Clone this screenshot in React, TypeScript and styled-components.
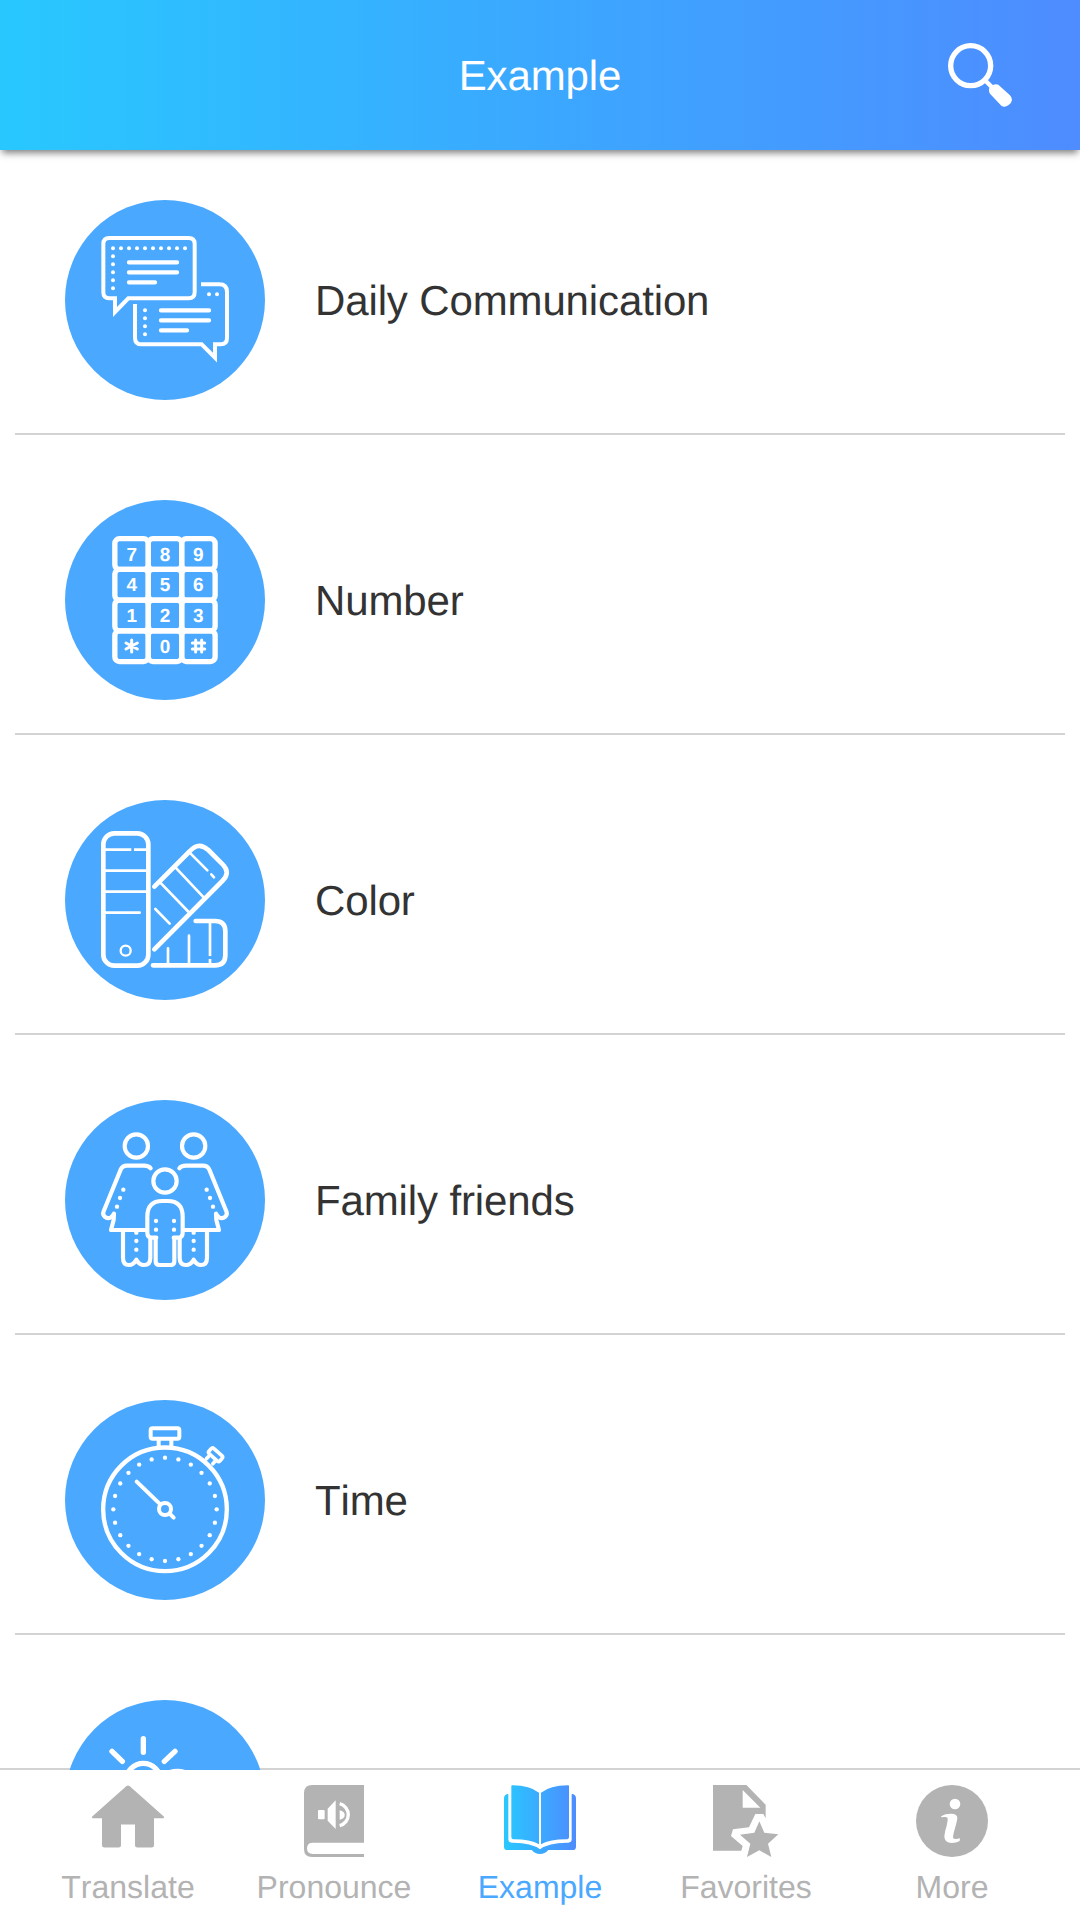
import React from "react";
import styled, { createGlobalStyle, css } from "styled-components";

const GlobalStyle = createGlobalStyle`
  html, body { margin: 0; padding: 0; background: #fff; }
  * { box-sizing: border-box; }
`;

const Screen = styled.div`
  width: 1080px;
  height: 1920px;
  display: flex;
  flex-direction: column;
  overflow: hidden;
  background: #fff;
  font-family: "Liberation Sans", Arial, sans-serif;
  font-kerning: none;
  text-rendering: geometricPrecision;
`;

const Header = styled.header`
  flex: none;
  z-index: 1;
  height: 150px;
  display: grid;
  grid-template-columns: 1fr auto 1fr;
  align-items: center;
  padding: 0 68px;
  background: linear-gradient(90deg, #28c8ff 0%, #3ba8ff 50%, #4e8cff 100%);
  box-shadow: 0 5px 7px -2px rgba(0, 0, 0, 0.5);
`;

const Title = styled.h1`
  grid-column: 2;
  margin: 0;
  padding-top: 2px;
  font-size: 42px;
  font-weight: 400;
  letter-spacing: -0.1px;
  color: #fff;
`;

const SearchButton = styled.button`
  justify-self: end;
  width: 64px;
  height: 64px;
  padding: 0;
  border: 0;
  background: none;
  color: #fff;
  svg { display: block; }
`;

const List = styled.ul`
  flex: 1;
  min-height: 0;
  margin: 0;
  padding: 0 15px;
  list-style: none;
  overflow: hidden;
  box-shadow: inset 0 -2px 0 #d3d3d3;
`;

const Row = styled.li<{ $first?: boolean }>`
  display: flex;
  align-items: flex-start;
  gap: 50px;
  height: ${(p) => (p.$first ? 285 : 300)}px;
  padding: ${(p) => (p.$first ? 50 : 65)}px 50px 0;
  border-bottom: 2px solid #d3d3d3;
`;

const Badge = styled.svg`
  flex: none;
  width: 200px;
  height: 200px;
  color: #fff;
`;

const Label = styled.span`
  line-height: 202px;
  font-size: 42px;
  letter-spacing: -0.13px;
  color: #333;
`;

const TabBar = styled.nav`
  flex: none;
  height: 150px;
  display: grid;
  grid-template-columns: repeat(5, 206px);
  justify-content: center;
  background: #fff;
`;

const Tab = styled.div<{ $active?: boolean }>`
  display: flex;
  flex-direction: column;
  align-items: center;
  gap: 12px;
  padding-top: 15px;
  font-size: 32px;
  color: #b3b3b3;
  ${(p) => p.$active && css`color: #4ba8ff;`}
`;

const TabIcon = styled.svg`
  width: 72px;
  height: 72px;
`;

type Point = [number, number];

const Dots = ({ points, r = 6 }: { points: Point[]; r?: number }) => (
  <g fill="currentColor" stroke="none">
    {points.map(([x, y]) => (
      <circle key={`${x}-${y}`} cx={x} cy={y} r={r} />
    ))}
  </g>
);

const range = (n: number) => Array.from({ length: n }, (_, i) => i);

const ChatArt = () => (
  <>
    <g strokeWidth="12">
      <path d="M163 144H401Q419 144 419 162V307Q419 325 401 325H220L180 366V325H163Q145 325 145 307V162Q145 144 163 144Z" strokeLinejoin="miter" />
      <path d="M438 283H493Q516 283 516 306V444Q516 463 497 463H480V503L440 463H260Q240 463 240 443V342" strokeLinecap="butt" strokeLinejoin="miter" />
    </g>
    <path strokeWidth="13" d="M222 217H366M222 247H366M222 277H300M318 361H462M318 391H462M318 421H396" />
    <Dots points={range(10).map((i): Point => [174 + i * 24, 175])} />
    <Dots points={range(5).map((i): Point => [174, 199 + i * 24])} />
    <Dots points={[[462, 313], [486, 313], [270, 361], [270, 385], [270, 409], [270, 433]]} />
  </>
);

const KEYS = [["7", "8", "9"], ["4", "5", "6"], ["1", "2", "3"], ["", "0", ""]];

const KeypadArt = () => (
  <>
    {KEYS.map((row, r) =>
      row.map((k, c) => (
        <g key={`${r}${c}`}>
          <rect x={179.5 + c * 100.3} y={146 + r * 92.2} width="100.3" height="92.2" rx="14" strokeWidth="16" />
          {k && (
            <text x={230 + c * 100} y={212 + r * 92} fontSize="57" fontWeight="700" textAnchor="middle" fill="currentColor" stroke="none">
              {k}
            </text>
          )}
        </g>
      ))
    )}
    <path strokeWidth="9" d="M230 450V486M213 459L247 477M247 459L213 477" />
    <path strokeWidth="9" d="M422 450V486M440 450V486M412 459H449M412 477H449" />
  </>
);

const PaletteArt = () => (
  <>
    <g strokeWidth="14">
      <rect x="145" y="130" width="135" height="397" rx="33" />
      <path d="M298 290L405 183Q431 154 460 180L503 223Q528 248 502 273L298 478" />
      <path d="M422 393H480Q511 393 511 424V495Q511 526 480 526H294" />
    </g>
    <g strokeWidth="8" strokeLinecap="butt">
      <path d="M150 179H229M237 179H275M150 242H275M150 305H275" />
      <path d="M313 275L401 366M359 230L446 322M465 399V498M465 507V522" />
    </g>
    <path strokeWidth="8" d="M150 368H254M404 188L457 241M469 253L477 262M301 357L344 401M339 475V522M402 437V522" />
    <circle cx="212" cy="482" r="15" strokeWidth="7" />
  </>
);

const Adult = () => (
  <>
    <circle cx="244" cy="168" r="35" />
    <path d="M287 235Q282 227 267 227H216Q202 227 197 239L146 364Q142 374 149 380Q158 388 168 382Q174 378 177 371L176 390L168 420H275" />
    <path d="M204 422V503Q204 525 222 525Q235 525 244 509Q253 525 267 525Q286 525 286 503V448" />
    <Dots r={6.5} points={[[205, 299], [195, 324], [186, 350], [244, 428], [244, 453], [244, 479]]} />
  </>
);

const FamilyArt = () => (
  <g strokeWidth="12.5">
    <Adult />
    <g transform="translate(660 0) scale(-1 1)">
      <Adult />
    </g>
    <circle cx="330" cy="273" r="35" />
    <path d="M302 448V514Q302 525 313 525H347Q358 525 358 514V448" />
    <path d="M304 443H292Q277 443 277 428V380Q277 333 322 333H338Q383 333 383 380V428Q383 443 368 443H356" />
    <Dots r={6.5} points={[[303, 393], [303, 419], [357, 393], [357, 419]]} />
  </g>
);

const StopwatchArt = () => (
  <>
    <circle cx="330" cy="358" r="185.5" strokeWidth="13" />
    <g strokeWidth="12">
      <rect x="287" y="115" width="86" height="31" rx="6" />
      <path d="M311 149V168M349 149V168" />
      <g transform="translate(480 196) rotate(42)" strokeWidth="11">
        <rect x="-22" y="-13" width="44" height="21" rx="6" />
        <path d="M-12 9V25M12 9V23" />
      </g>
      <circle cx="330" cy="357" r="18" />
      <path d="M245 275L316 343M344 371L356 383" />
    </g>
    <Dots
      r={6.5}
      points={range(24).map((i): Point => {
        const a = (i * Math.PI) / 12;
        return [330 + 155 * Math.sin(a), 358 - 155 * Math.cos(a)];
      })}
    />
  </>
);

const WeatherArt = () => (
  <g strokeWidth="16">
    <path d="M265 146V187M171 184L202 214M360 184L328 214" />
    <circle cx="265" cy="271" r="51" />
    <circle cx="367" cy="304" r="60" />
  </g>
);

const CATEGORIES: { name: string; Art: React.FC }[] = [
  { name: "Daily Communication", Art: ChatArt },
  { name: "Number", Art: KeypadArt },
  { name: "Color", Art: PaletteArt },
  { name: "Family friends", Art: FamilyArt },
  { name: "Time", Art: StopwatchArt },
  { name: "", Art: WeatherArt },
];

const SearchIcon = () => (
  <svg width="64" height="64" viewBox="84 69 192 192" fill="currentColor">
    <circle cx="152" cy="137" r="60" fill="none" stroke="currentColor" strokeWidth="16" />
    <path d="M192 178L216 202" stroke="currentColor" strokeWidth="13" />
    <path d="M207 207Q207 201 217 196Q228 190 235 194L269 225Q276 231 276 240Q275 249 265 256Q253 264 244 257L210 221Q206 215 207 207Z" />
  </svg>
);

const HomeIcon = () => (
  <TabIcon viewBox="0 0 72 72" fill="currentColor">
    <path d="M34.5 1Q36 -.2 37.5 1L71.5 31.3Q73 33 70.5 33.2H62V60Q62 62.5 59.5 62.5H45.5Q43 62.5 43 60V39.5H29V60Q29 62.5 26.5 62.5H12.5Q10 62.5 10 60V33.2H1.5Q-1 33 .5 31.3Z" />
  </TabIcon>
);

const AudioBookIcon = () => (
  <TabIcon viewBox="24 15 216 216">
    <path fill="currentColor" d="M222 15H67Q42 15 42 40V207Q42 231 66 231H222V222H68Q51 222 51 205Q51 188 68 188H222Z" />
    <g fill="#fff">
      <rect x="84" y="90" width="20" height="28" rx="3" />
      <path d="M113 86L137 61V147L113 122Z" />
      <path d="M149 91Q164 94 164 105Q164 116 149 119Z" />
      <path fill="none" stroke="#fff" strokeWidth="10" d="M149 71A34 34 0 0 1 149 137" />
    </g>
  </TabIcon>
);

const OpenBookIcon = () => (
  <TabIcon viewBox="642 15 216 216">
    <defs>
      <linearGradient id="book" gradientUnits="userSpaceOnUse" x1="642" x2="858" y1="0" y2="0">
        <stop offset="0" stopColor="#28c8ff" />
        <stop offset="1" stopColor="#4e8cff" />
      </linearGradient>
    </defs>
    <g fill="url(#book)">
      <path d="M664 18Q664 15 668 16Q720 17 747 38V193Q720 178 673 178Q664 178 664 170Z" />
      <path d="M837 18Q837 15 833 16Q780 17 753 38V193Q780 178 828 178Q837 178 837 170Z" />
      <path d="M655 42V178Q655 188 665 188Q723 187 750 208Q777 187 835 188Q845 188 845 178V42Q858 42 858 56V200Q858 210 848 210H775Q765 222 750 222Q735 222 725 210H652Q642 210 642 200V56Q642 42 655 42Z" />
    </g>
  </TabIcon>
);

const FavoriteFileIcon = () => (
  <TabIcon viewBox="30 15 216 216" fill="currentColor">
    <path d="M39 15H139L197 74V115L190 102H166L147 142L99 148L93 168L128 198L124 212H39Z" />
    <path fill="#fff" d="M128 30V83H181Z" />
    <path d="M178 124L193 158L235 163L204 191L214 231L178 211L141 231L151 191L120 164L163 158Z" />
  </TabIcon>
);

const InfoIcon = () => (
  <TabIcon viewBox="648 15 216 216">
    <circle cx="756" cy="123" r="108" fill="currentColor" />
    <circle cx="765" cy="72" r="16" fill="#fff" />
    <path
      fill="#fff"
      d="M725 108Q735 101 751 101Q773 100 772 115Q771 124 766 141Q760 160 759 171Q759 178 767 177Q774 177 780 175L779 183Q769 189 755 189Q733 189 733 169Q734 155 740 137Q744 122 743 115Q741 109 724 112Q721 110 725 108Z"
    />
  </TabIcon>
);

const TABS: { name: string; Icon: React.FC; active?: boolean }[] = [
  { name: "Translate", Icon: HomeIcon },
  { name: "Pronounce", Icon: AudioBookIcon },
  { name: "Example", Icon: OpenBookIcon, active: true },
  { name: "Favorites", Icon: FavoriteFileIcon },
  { name: "More", Icon: InfoIcon },
];

export default function App() {
  return (
    <Screen>
      <GlobalStyle />
      <Header>
        <Title>Example</Title>
        <SearchButton>
          <SearchIcon />
        </SearchButton>
      </Header>
      <List>
        {CATEGORIES.map(({ name, Art }, i) => (
          <Row key={i} $first={i === 0}>
            <Badge viewBox="30 30 600 600" fill="none" stroke="currentColor" strokeLinecap="round" strokeLinejoin="round">
              <circle cx="330" cy="330" r="300" fill="#4ba8ff" stroke="none" />
              <Art />
            </Badge>
            <Label>{name}</Label>
          </Row>
        ))}
      </List>
      <TabBar>
        {TABS.map(({ name, Icon, active }) => (
          <Tab key={name} $active={active}>
            <Icon />
            <span>{name}</span>
          </Tab>
        ))}
      </TabBar>
    </Screen>
  );
}
